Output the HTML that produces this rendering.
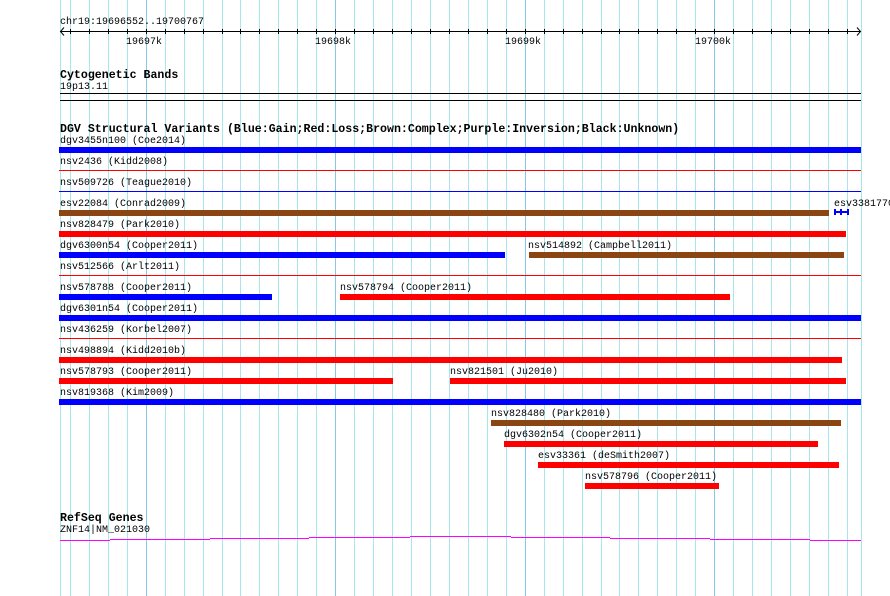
<!DOCTYPE html>
<html><head><meta charset="utf-8"><style>
body{margin:0;width:890px;height:596px;background:#fff;position:relative;overflow:hidden;font-family:"Liberation Mono",monospace;}
div{position:absolute;}
.g{top:0;height:596px;width:1px;background:#a8e6ee;}
.G{top:0;height:596px;width:1px;background:#86c8e6;}
.t{font-size:10px;line-height:12px;white-space:nowrap;color:#000;margin-top:2px;}
.h{font-size:11.6px;line-height:12px;font-weight:bold;white-space:nowrap;color:#000;margin-top:2px;}
.tk{top:29px;height:5px;width:1px;background:#000;}
.b{height:6px;}
.bl{background:#0000ff}.rd{background:#ff0000}.br{background:#8b4513}
.ln{height:1px;}
.m{height:1px;background:#ff00ff;}
</style></head><body>
<div id="grid"></div>
<script>
var s='';
s+='<div class="g" style="left:60px"></div>';
for(var k=0;k<42;k++){var x=Math.round(69.9+18.95*k);var maj=(k%10==4);s+='<div class="'+(maj?'G':'g')+'" style="left:'+x+'px"></div>';s+='<div class="tk" style="left:'+x+'px"></div>';}
s+='<div class="g" style="left:861px"></div>';
document.getElementById('grid').innerHTML=s;
</script>
<div class="t" style="left:60px;top:15px">chr19:19696552..19700767</div>
<div style="left:60px;top:31px;width:801px;height:1px;background:#000"></div>
<svg style="position:absolute;left:0;top:0" width="890" height="40"><path d="M64 27.5 L60.5 31.5 L64 35.5 M857 27.5 L860.5 31.5 L857 35.5" stroke="#000" fill="none" stroke-width="1"/></svg>
<div class="t" style="left:126px;top:35px">19697k</div>
<div class="t" style="left:315px;top:35px">19698k</div>
<div class="t" style="left:505px;top:35px">19699k</div>
<div class="t" style="left:695px;top:35px">19700k</div>

<div class="h" style="left:60px;top:68px">Cytogenetic Bands</div>
<div class="t" style="left:60px;top:80px">19p13.11</div>
<div style="left:60px;top:93px;width:801px;height:1px;background:#000"></div>
<div style="left:60px;top:100px;width:801px;height:1px;background:#000"></div>

<div class="h" style="left:60px;top:122px">DGV Structural Variants (Blue:Gain;Red:Loss;Brown:Complex;Purple:Inversion;Black:Unknown)</div>

<div class="t" style="left:60px;top:134px">dgv3455n100 (Coe2014)</div>
<div class="b bl" style="left:59px;top:147px;width:802px"></div>
<div class="t" style="left:60px;top:155px">nsv2436 (Kidd2008)</div>
<div class="ln rd" style="left:59px;top:170px;width:802px"></div>
<div class="t" style="left:60px;top:176px">nsv509726 (Teague2010)</div>
<div class="ln bl" style="left:59px;top:191px;width:802px"></div>
<div class="t" style="left:60px;top:197px">esv22084 (Conrad2009)</div>
<div class="b br" style="left:59px;top:210px;width:770px"></div>
<div class="t" style="left:834px;top:197px">esv3381770</div>
<div class="bl" style="left:834px;top:209px;width:2px;height:6px"></div>
<div class="bl" style="left:834px;top:211px;width:15px;height:2px"></div>
<div class="bl" style="left:840px;top:209px;width:2px;height:6px"></div>
<div class="bl" style="left:847px;top:209px;width:2px;height:6px"></div>
<div class="t" style="left:60px;top:218px">nsv828479 (Park2010)</div>
<div class="b rd" style="left:59px;top:231px;width:787px"></div>
<div class="t" style="left:60px;top:239px">dgv6300n54 (Cooper2011)</div>
<div class="b bl" style="left:59px;top:252px;width:446px"></div>
<div class="t" style="left:528px;top:239px">nsv514892 (Campbell2011)</div>
<div class="b br" style="left:529px;top:252px;width:315px"></div>
<div class="t" style="left:60px;top:260px">nsv512566 (Arlt2011)</div>
<div class="ln rd" style="left:59px;top:275px;width:802px"></div>
<div class="t" style="left:60px;top:281px">nsv578788 (Cooper2011)</div>
<div class="b bl" style="left:59px;top:294px;width:213px"></div>
<div class="t" style="left:340px;top:281px">nsv578794 (Cooper2011)</div>
<div class="b rd" style="left:340px;top:294px;width:390px"></div>
<div class="t" style="left:60px;top:302px">dgv6301n54 (Cooper2011)</div>
<div class="b bl" style="left:59px;top:315px;width:802px"></div>
<div class="t" style="left:60px;top:323px">nsv436259 (Korbel2007)</div>
<div class="ln rd" style="left:59px;top:338px;width:802px"></div>
<div class="t" style="left:60px;top:344px">nsv498894 (Kidd2010b)</div>
<div class="b rd" style="left:59px;top:357px;width:783px"></div>
<div class="t" style="left:60px;top:365px">nsv578793 (Cooper2011)</div>
<div class="b rd" style="left:59px;top:378px;width:334px"></div>
<div class="t" style="left:450px;top:365px">nsv821501 (Ju2010)</div>
<div class="b rd" style="left:450px;top:378px;width:396px"></div>
<div class="t" style="left:60px;top:386px">nsv819368 (Kim2009)</div>
<div class="b bl" style="left:59px;top:399px;width:802px"></div>
<div class="t" style="left:491px;top:407px">nsv828480 (Park2010)</div>
<div class="b br" style="left:491px;top:420px;width:350px"></div>
<div class="t" style="left:504px;top:428px">dgv6302n54 (Cooper2011)</div>
<div class="b rd" style="left:504px;top:441px;width:314px"></div>
<div class="t" style="left:538px;top:449px">esv33361 (deSmith2007)</div>
<div class="b rd" style="left:538px;top:462px;width:301px"></div>
<div class="t" style="left:585px;top:470px">nsv578796 (Cooper2011)</div>
<div class="b rd" style="left:585px;top:483px;width:134px"></div>

<div class="h" style="left:60px;top:511px">RefSeq Genes</div>
<div class="t" style="left:60px;top:523px">ZNF14|NM_021030</div>
<div class="m" style="left:60px;top:540px;width:50px"></div>
<div class="m" style="left:110px;top:539px;width:100px"></div>
<div class="m" style="left:210px;top:538px;width:99px"></div>
<div class="m" style="left:309px;top:537px;width:101px"></div>
<div class="m" style="left:410px;top:536px;width:101px"></div>
<div class="m" style="left:511px;top:537px;width:99px"></div>
<div class="m" style="left:610px;top:538px;width:100px"></div>
<div class="m" style="left:710px;top:539px;width:100px"></div>
<div class="m" style="left:810px;top:540px;width:51px"></div>
</body></html>
